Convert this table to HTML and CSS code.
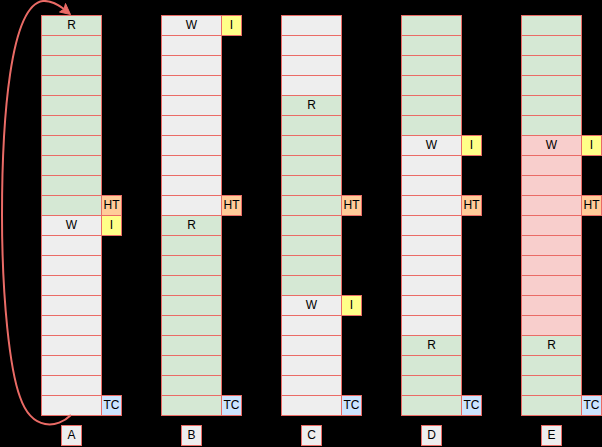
FILE: index.html
```html
<!DOCTYPE html>
<html>
<head>
<meta charset="utf-8">
<link rel="stylesheet" href="styles.css">
</head>
<body>
<div class="canvas">
  <div class="groups">
    <div class="group">
      <div class="row"><div class="cell green">R</div></div>
      <div class="row"><div class="cell green"></div></div>
      <div class="row"><div class="cell green"></div></div>
      <div class="row"><div class="cell green"></div></div>
      <div class="row"><div class="cell green"></div></div>
      <div class="row"><div class="cell green"></div></div>
      <div class="row"><div class="cell green"></div></div>
      <div class="row"><div class="cell green"></div></div>
      <div class="row"><div class="cell green"></div></div>
      <div class="row"><div class="cell green"></div><div class="badge ht">HT</div></div>
      <div class="row"><div class="cell gray">W</div><div class="badge in">I</div></div>
      <div class="row"><div class="cell gray"></div></div>
      <div class="row"><div class="cell gray"></div></div>
      <div class="row"><div class="cell gray"></div></div>
      <div class="row"><div class="cell gray"></div></div>
      <div class="row"><div class="cell gray"></div></div>
      <div class="row"><div class="cell gray"></div></div>
      <div class="row"><div class="cell gray"></div></div>
      <div class="row"><div class="cell gray"></div></div>
      <div class="row"><div class="cell gray"></div><div class="badge tc">TC</div></div>
      <div class="label">A</div>
    </div>
    <div class="group">
      <div class="row"><div class="cell gray">W</div><div class="badge in">I</div></div>
      <div class="row"><div class="cell gray"></div></div>
      <div class="row"><div class="cell gray"></div></div>
      <div class="row"><div class="cell gray"></div></div>
      <div class="row"><div class="cell gray"></div></div>
      <div class="row"><div class="cell gray"></div></div>
      <div class="row"><div class="cell gray"></div></div>
      <div class="row"><div class="cell gray"></div></div>
      <div class="row"><div class="cell gray"></div></div>
      <div class="row"><div class="cell gray"></div><div class="badge ht">HT</div></div>
      <div class="row"><div class="cell green">R</div></div>
      <div class="row"><div class="cell green"></div></div>
      <div class="row"><div class="cell green"></div></div>
      <div class="row"><div class="cell green"></div></div>
      <div class="row"><div class="cell green"></div></div>
      <div class="row"><div class="cell green"></div></div>
      <div class="row"><div class="cell green"></div></div>
      <div class="row"><div class="cell green"></div></div>
      <div class="row"><div class="cell green"></div></div>
      <div class="row"><div class="cell green"></div><div class="badge tc">TC</div></div>
      <div class="label">B</div>
    </div>
    <div class="group">
      <div class="row"><div class="cell gray"></div></div>
      <div class="row"><div class="cell gray"></div></div>
      <div class="row"><div class="cell gray"></div></div>
      <div class="row"><div class="cell gray"></div></div>
      <div class="row"><div class="cell green">R</div></div>
      <div class="row"><div class="cell green"></div></div>
      <div class="row"><div class="cell green"></div></div>
      <div class="row"><div class="cell green"></div></div>
      <div class="row"><div class="cell green"></div></div>
      <div class="row"><div class="cell green"></div><div class="badge ht">HT</div></div>
      <div class="row"><div class="cell green"></div></div>
      <div class="row"><div class="cell green"></div></div>
      <div class="row"><div class="cell green"></div></div>
      <div class="row"><div class="cell green"></div></div>
      <div class="row"><div class="cell gray">W</div><div class="badge in">I</div></div>
      <div class="row"><div class="cell gray"></div></div>
      <div class="row"><div class="cell gray"></div></div>
      <div class="row"><div class="cell gray"></div></div>
      <div class="row"><div class="cell gray"></div></div>
      <div class="row"><div class="cell gray"></div><div class="badge tc">TC</div></div>
      <div class="label">C</div>
    </div>
    <div class="group">
      <div class="row"><div class="cell green"></div></div>
      <div class="row"><div class="cell green"></div></div>
      <div class="row"><div class="cell green"></div></div>
      <div class="row"><div class="cell green"></div></div>
      <div class="row"><div class="cell green"></div></div>
      <div class="row"><div class="cell green"></div></div>
      <div class="row"><div class="cell gray">W</div><div class="badge in">I</div></div>
      <div class="row"><div class="cell gray"></div></div>
      <div class="row"><div class="cell gray"></div></div>
      <div class="row"><div class="cell gray"></div><div class="badge ht">HT</div></div>
      <div class="row"><div class="cell gray"></div></div>
      <div class="row"><div class="cell gray"></div></div>
      <div class="row"><div class="cell gray"></div></div>
      <div class="row"><div class="cell gray"></div></div>
      <div class="row"><div class="cell gray"></div></div>
      <div class="row"><div class="cell gray"></div></div>
      <div class="row"><div class="cell green">R</div></div>
      <div class="row"><div class="cell green"></div></div>
      <div class="row"><div class="cell green"></div></div>
      <div class="row"><div class="cell green"></div><div class="badge tc">TC</div></div>
      <div class="label">D</div>
    </div>
    <div class="group">
      <div class="row"><div class="cell green"></div></div>
      <div class="row"><div class="cell green"></div></div>
      <div class="row"><div class="cell green"></div></div>
      <div class="row"><div class="cell green"></div></div>
      <div class="row"><div class="cell green"></div></div>
      <div class="row"><div class="cell green"></div></div>
      <div class="row"><div class="cell red">W</div><div class="badge in">I</div></div>
      <div class="row"><div class="cell red"></div></div>
      <div class="row"><div class="cell red"></div></div>
      <div class="row"><div class="cell red"></div><div class="badge ht">HT</div></div>
      <div class="row"><div class="cell red"></div></div>
      <div class="row"><div class="cell red"></div></div>
      <div class="row"><div class="cell red"></div></div>
      <div class="row"><div class="cell red"></div></div>
      <div class="row"><div class="cell red"></div></div>
      <div class="row"><div class="cell red"></div></div>
      <div class="row"><div class="cell green">R</div></div>
      <div class="row"><div class="cell green"></div></div>
      <div class="row"><div class="cell green"></div></div>
      <div class="row"><div class="cell green"></div><div class="badge tc">TC</div></div>
      <div class="label">E</div>
    </div>
  </div>
  <svg class="arrow" width="602" height="447" viewBox="0 0 602 447" xmlns="http://www.w3.org/2000/svg">
    <path d="M71,415 C58,428 32,432 20,397 C10,370 2,300 2,215 C2,120 10,5 43,1 C50,0.5 58,4.5 64,9" fill="none" stroke="#EA6B66" stroke-width="2"/>
    <polygon points="70.5,14.5 59.5,12 64,9 65.5,3.5" fill="#EA6B66" stroke="#EA6B66" stroke-width="1" stroke-linejoin="miter"/>
  </svg>
</div>
</body>
</html>
```

FILE: styles.css
```css
html, body {
  margin: 0;
  padding: 0;
  background: #000;
}

.canvas {
  position: relative;
  width: 602px;
  height: 447px;
  overflow: hidden;
  font-family: "Liberation Sans", Arial, Helvetica, sans-serif;
  font-size: 12px;
  color: #000;
}

.groups {
  display: flex;
  gap: 39px;
  padding: 15px 0 0 41px;
}

.group {
  display: flex;
  flex-direction: column;
  width: 81px;
}

.row {
  display: flex;
  height: 21px;
}

.row + .row {
  margin-top: -1px;
}

.cell,
.badge,
.label {
  box-sizing: border-box;
  height: 21px;
  border: 1px solid #EA6B66;
  line-height: 19px;
  text-align: center;
}

.cell {
  width: 61px;
}

.badge {
  width: 21px;
  margin-left: -1px;
}

.green { background: #D5E8D4; }
.gray { background: #EEEEEE; }
.red { background: #F8CECC; }

.ht { background: #FFCC99; }
.in { background: #FFFF88; }
.tc { background: #CCE5FF; }

.label {
  width: 21px;
  margin: 9px 0 0 20px;
  background: #EEEEEE;
}

.arrow {
  position: absolute;
  top: 0;
  left: 0;
  pointer-events: none;
}
```
